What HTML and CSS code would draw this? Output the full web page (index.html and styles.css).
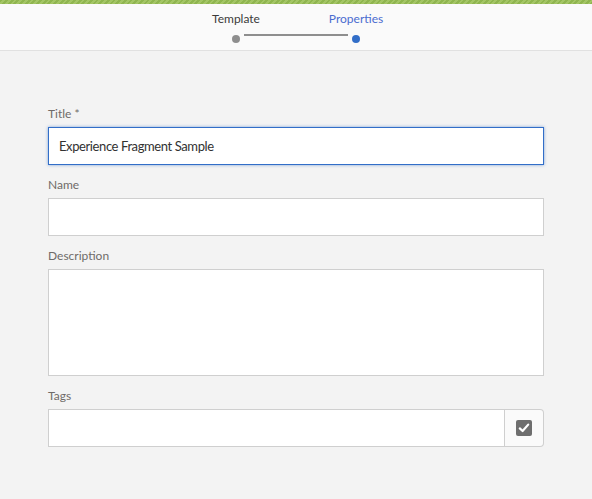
FILE: index.html
```html
<!DOCTYPE html>
<html>
<head>
<meta charset="utf-8">
<link rel="stylesheet" href="styles.css">
</head>
<body>
<div class="topstripe"></div>
<header class="wizard">
  <div class="steps">
    <div class="step done">
      <span class="step-label">Template</span>
      <span class="step-dot"></span>
    </div>
    <div class="step current">
      <span class="step-label">Properties</span>
      <span class="step-dot"></span>
    </div>
  </div>
</header>
<main class="form">
  <div class="field">
    <label class="label">Title *</label>
    <input class="input focused" type="text" value="Experience Fragment Sample">
  </div>
  <div class="field">
    <label class="label">Name</label>
    <input class="input" type="text">
  </div>
  <div class="field">
    <label class="label">Description</label>
    <textarea class="textarea"></textarea>
  </div>
  <div class="field">
    <label class="label">Tags</label>
    <div class="tagrow">
      <input class="input tag-input" type="text">
      <button class="tag-btn" type="button">
        <svg width="16" height="16" viewBox="0 0 16 16">
          <rect x="0" y="0" width="16" height="16" rx="2" fill="#6e6e6e"/>
          <path d="M3.8 8.4 L6.6 11 L12.2 4.6" fill="none" stroke="#fff" stroke-width="2.2" stroke-linecap="round" stroke-linejoin="round"/>
        </svg>
      </button>
    </div>
  </div>
</main>
</body>
</html>
```
FILE: styles.css
```css
* { box-sizing: border-box; }
html, body {
  margin: 0;
  padding: 0;
  background: #f3f3f3;
  font-family: Lato, "Open Sans", sans-serif;
  width: 592px;
  height: 499px;
  overflow: hidden;
}
.topstripe {
  height: 4px;
  background: repeating-linear-gradient(135deg, #8fb54f 0, #8fb54f 2px, #a3c565 2px, #a3c565 4px);
}
.wizard {
  height: 47px;
  background: #fafafa;
  border-bottom: 1px solid #e1e1e1;
  display: flex;
  justify-content: center;
}
.steps {
  display: flex;
  position: relative;
}
.step {
  width: 120px;
  display: flex;
  flex-direction: column;
  align-items: center;
  position: relative;
}
.step-label {
  font-size: 12px;
  line-height: 16px;
  margin-top: 7px;
  color: #3a3a3a;
}
.step.current .step-label { color: #4a6cd0; }
.step-dot {
  width: 8px;
  height: 8px;
  border-radius: 50%;
  background: #8e8e8e;
  margin-top: 8px;
}
.step.current .step-dot { background: #326ec8; }
.step.done::after {
  content: "";
  position: absolute;
  left: 68px;
  width: 104px;
  top: 30px;
  height: 2px;
  background: #8e8e8e;
}
.form {
  padding: 54px 48px 0 48px;
}
.field {
  display: flex;
  flex-direction: column;
  margin-bottom: 11px;
}
.label {
  font-size: 12px;
  line-height: 18px;
  color: #6f6b68;
  margin-bottom: 4px;
}
.input {
  height: 38px;
  border: 1px solid #cfcfcf;
  background: #fff;
  padding: 0 10px;
  font-family: Lato, "Open Sans", sans-serif;
  font-size: 13px;
  letter-spacing: -0.4px;
  color: #323232;
  outline: none;
  margin: 0;
  width: 496px;
}
.input.focused {
  border-color: #326ec8;
  box-shadow: 0 0 3px rgba(50, 110, 200, 0.6);
}
.textarea {
  height: 107px;
  width: 496px;
  border: 1px solid #cfcfcf;
  background: #fff;
  resize: none;
  margin: 0;
  outline: none;
}
.tagrow {
  display: flex;
  width: 496px;
}
.tag-input {
  flex: 1;
  width: auto;
}
.tag-btn {
  width: 39px;
  height: 38px;
  border: 1px solid #cfcfcf;
  border-left: none;
  border-radius: 0 4px 4px 0;
  background: #fafafa;
  display: flex;
  align-items: center;
  justify-content: center;
  padding: 0;
  margin: 0;
}
.tag-btn svg { display: block; }
```
